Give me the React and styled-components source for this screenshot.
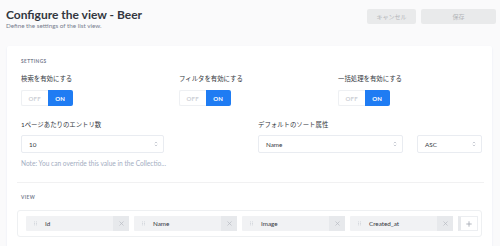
import React from "react";
import styled, { createGlobalStyle } from "styled-components";

const Global = createGlobalStyle`
  html, body { margin: 0; padding: 0; background: #fafafb; }
  body { font-family: Lato, "Noto Sans CJK JP", sans-serif; }
  * { box-sizing: border-box; }
`;

const Page = styled.div`
  width: 500px;
  height: 246px;
  overflow: hidden;
  background: #fafafb;
  font-family: Lato, "Noto Sans CJK JP", sans-serif;
`;

const Header = styled.header`
  height: 46px;
  display: flex;
  justify-content: space-between;
  align-items: flex-start;
  padding: 7px 4px 0 6px;
`;

const TitleBlock = styled.div`
  display: flex;
  flex-direction: column;
`;

const Title = styled.h1`
  margin: 0;
  font-size: 12px;
  line-height: 15px;
  font-weight: 700;
  color: #333740;
`;

const Subtitle = styled.p`
  margin: 0;
  font-size: 6.3px;
  line-height: 8px;
  color: #787e8f;
`;

const Actions = styled.div`
  display: flex;
  gap: 5px;
  padding-top: 2px;
`;

const Button = styled.button`
  height: 15px;
  width: ${(p) => p.$w}px;
  border: none;
  border-radius: 2px;
  background: #e9eaeb;
  color: #b4b6ba;
  font-family: Lato, "Noto Sans CJK JP", sans-serif;
  font-size: 6px;
  padding: 0;
`;

const Card = styled.section`
  margin-left: 7px;
  width: 485px;
  height: 210px;
  background: #fff;
  box-shadow: 0 1px 2px #e3e9f3;
  border-radius: 2px;
  padding: 12px 10px 0 14px;
`;

const SectionTitle = styled.div`
  font-size: 4.8px;
  line-height: 7px;
  font-weight: 700;
  letter-spacing: 0.4px;
  color: #787e8f;
  text-transform: uppercase;
  margin-top: ${(p) => p.$mt || 0}px;
`;

const ToggleRow = styled.div`
  display: grid;
  grid-template-columns: 158px 159px 1fr;
  margin-top: 10px;
`;

const Field = styled.div`
  display: flex;
  flex-direction: column;
`;

const Label = styled.div`
  font-size: 6.4px;
  line-height: 8px;
  color: #333740;
  margin-bottom: ${(p) => p.$mb}px;
`;

const Toggle = styled.div`
  display: flex;
  width: 52px;
  height: 16px;
`;

const ToggleHalf = styled.div`
  flex: 1;
  display: flex;
  align-items: center;
  justify-content: center;
  font-size: 6px;
  font-weight: 700;
  letter-spacing: 0.3px;
  border-radius: ${(p) => (p.$on ? "0 2px 2px 0" : "2px 0 0 2px")};
  background: ${(p) => (p.$on ? "#1f7cf3" : "#fff")};
  color: ${(p) => (p.$on ? "#fff" : "#cdd0d6")};
  border: ${(p) => (p.$on ? "none" : "1px solid #eef0f3")};
  border-right: none;
`;

const FormRow = styled.div`
  display: grid;
  grid-template-columns: 216px 224px;
  column-gap: 21px;
  margin-top: 15px;
`;

const SelectsLine = styled.div`
  display: flex;
  gap: 14px;
`;

const Select = styled.div`
  width: ${(p) => p.$w}px;
  height: 18px;
  border: 1px solid #e9ecf1;
  border-radius: 2px;
  display: flex;
  align-items: center;
  justify-content: space-between;
  padding: 0 5px 0 7px;
  font-size: 6.3px;
  color: #333740;
  background: #fff;
`;

const Note = styled.div`
  margin-top: 7px;
  font-size: 6.6px;
  line-height: 7px;
  color: #a3aec2;
`;

const Divider = styled.hr`
  border: none;
  border-top: 1px solid #f1f1f2;
  margin: 15px 0 0 -4px;
  width: 467px;
`;

const ViewBox = styled.div`
  margin: 9px 0 0 -4px;
  width: 465px;
  height: 27px;
  border: 1px solid #eef0f2;
  border-radius: 3px;
  display: flex;
  align-items: center;
  gap: 5px;
  padding: 0 0 0 8px;
`;

const Item = styled.div`
  width: 103px;
  height: 15px;
  display: flex;
  align-items: center;
  background: #f1f2f4;
  border-radius: 1px;
`;

const Handle = styled.span`
  width: 19px;
  display: flex;
  justify-content: center;
  align-items: center;
`;

const ItemName = styled.span`
  flex: 1;
  font-size: 6.3px;
  color: #333740;
`;

const Remove = styled.span`
  width: 16px;
  height: 15px;
  background: #e7e9ec;
  display: flex;
  align-items: center;
  justify-content: center;
`;

const AddButton = styled.div`
  width: 20px;
  height: 15px;
  display: flex;
  align-items: center;
  justify-content: center;
  border: 1px solid #eceef1;
  border-left: 3px solid #e7e9ec;
  background: #fff;
`;

const Arrows = () => (
  <svg width="4" height="6" viewBox="0 0 4 6">
    <path d="M0.8 2.2 L2 1 L3.2 2.2 M0.8 3.8 L2 5 L3.2 3.8" stroke="#b4b9c4" strokeWidth="0.7" fill="none" />
  </svg>
);

const Grip = () => (
  <svg width="3" height="5" viewBox="0 0 3 5">
    {[0.5, 2, 3.5].map((y) => (
      <g key={y}>
        <rect x="0" y={y} width="0.8" height="0.8" fill="#c6cad2" />
        <rect x="2" y={y} width="0.8" height="0.8" fill="#c6cad2" />
      </g>
    ))}
  </svg>
);

const Cross = () => (
  <svg width="5" height="5" viewBox="0 0 5 5">
    <path d="M0.5 0.5 L4.5 4.5 M4.5 0.5 L0.5 4.5" stroke="#b7bbc3" strokeWidth="0.7" />
  </svg>
);

const Plus = () => (
  <svg width="6" height="6" viewBox="0 0 6 6">
    <path d="M3 0.3 V5.7 M0.3 3 H5.7" stroke="#9ea3ad" strokeWidth="0.8" />
  </svg>
);

const toggles = ["検索を有効にする", "フィルタを有効にする", "一括処理を有効にする"];
const fields = ["Id", "Name", "Image", "Created_at"];

export default function App() {
  return (
    <Page>
      <Global />
      <Header>
        <TitleBlock>
          <Title>Configure the view - Beer</Title>
          <Subtitle>Define the settings of the list view.</Subtitle>
        </TitleBlock>
        <Actions>
          <Button $w={49}>キャンセル</Button>
          <Button $w={75}>保存</Button>
        </Actions>
      </Header>
      <Card>
        <SectionTitle>Settings</SectionTitle>
        <ToggleRow>
          {toggles.map((t) => (
            <Field key={t}>
              <Label $mb={7}>{t}</Label>
              <Toggle>
                <ToggleHalf>OFF</ToggleHalf>
                <ToggleHalf $on>ON</ToggleHalf>
              </Toggle>
            </Field>
          ))}
        </ToggleRow>
        <FormRow>
          <Field>
            <Label $mb={6}>1ページあたりのエントリ数</Label>
            <Select $w={143}>
              <span>10</span>
              <Arrows />
            </Select>
            <Note>Note: You can override this value in the Collectio...</Note>
          </Field>
          <Field>
            <Label $mb={6}>デフォルトのソート属性</Label>
            <SelectsLine>
              <Select $w={145}>
                <span>Name</span>
                <Arrows />
              </Select>
              <Select $w={65}>
                <span>ASC</span>
                <Arrows />
              </Select>
            </SelectsLine>
          </Field>
        </FormRow>
        <Divider />
        <SectionTitle $mt={11}>View</SectionTitle>
        <ViewBox>
          {fields.map((f) => (
            <Item key={f}>
              <Handle>
                <Grip />
              </Handle>
              <ItemName>{f}</ItemName>
              <Remove>
                <Cross />
              </Remove>
            </Item>
          ))}
          <AddButton>
            <Plus />
          </AddButton>
        </ViewBox>
      </Card>
    </Page>
  );
}
